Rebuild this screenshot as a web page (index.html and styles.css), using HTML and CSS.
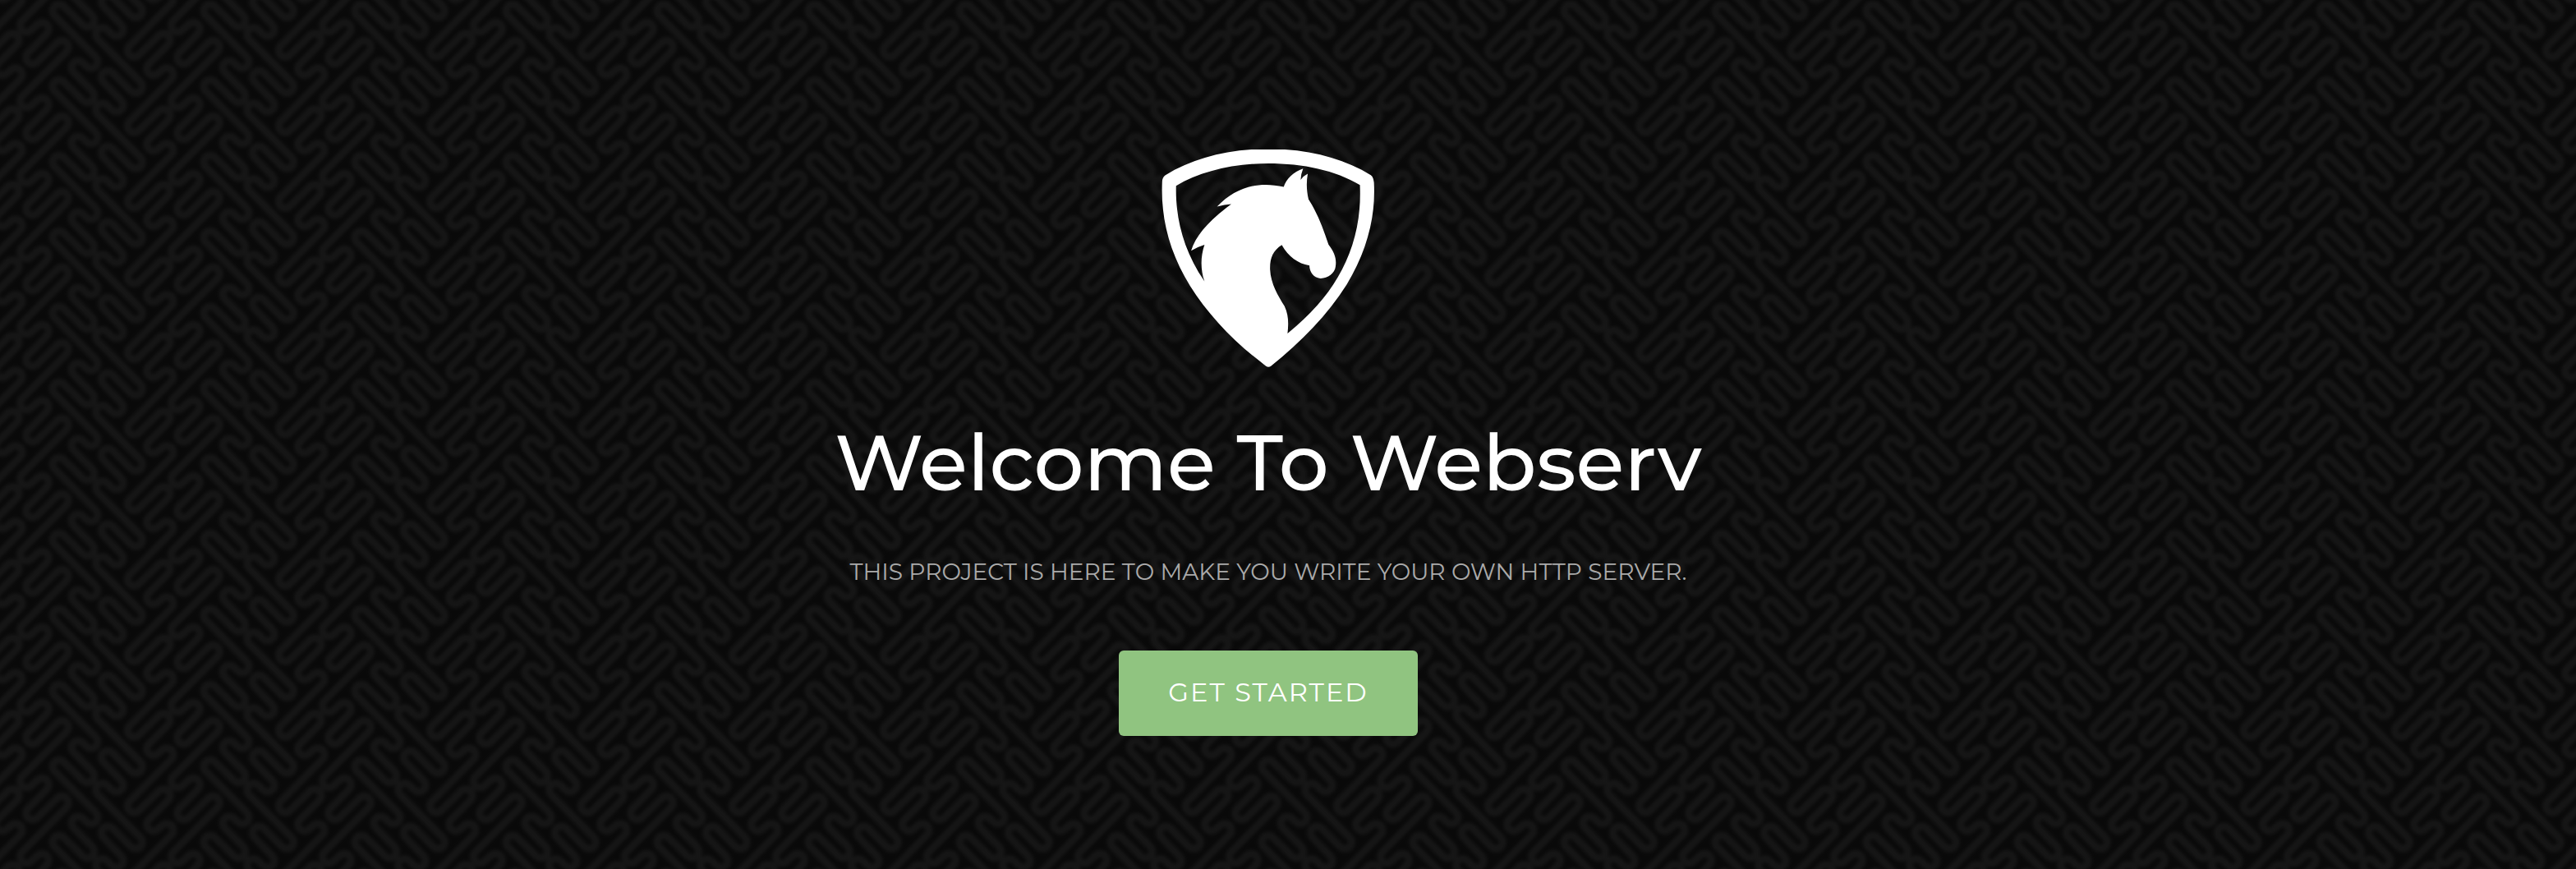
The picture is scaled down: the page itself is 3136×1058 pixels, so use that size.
FILE: index.html
```html
<!DOCTYPE html>
<html lang="en">
<head>
<meta charset="utf-8">
<meta name="viewport" content="width=device-width, initial-scale=1">
<title>Webserv</title>
<link rel="stylesheet" href="styles.css">
</head>
<body>
<main class="hero">
  <svg class="logo" viewBox="102 66 777 797" role="img" aria-label="Webserv logo">
    <path fill="#fff" fill-rule="evenodd" d="M102 185Q102 168 114 160C215 97 345 64 490 64S765 97 866 160Q878 168 878 200C882 320 850 440 778 560C709 670 612 770 500 859Q491 866 482 859C370 775 273 675 204 565C130 445 96 320 102 185ZM153 199C150 310 176 430 257 549C242 505 242 460 257 415Q233 422 208 437C225 380 275 325 355 266Q330 267 303 275C367 209 446 180 547 203C556 174 583 148 618 136Q610 155 609 177Q619 163 635 155C629 188 631 220 638 249C672 301 691 355 711 414C733 442 741 466 737 494C735 520 706 539 681 538C656 535 642 516 641 491C600 485 563 458 540 416C507 437 496 465 497 505C500 560 526 600 550 640C565 672 565 703 561 740C645 671 704 605 745 534C802 437 832 325 826 196C735 142 620 117 490 117C360 117 240 147 153 199Z"/>
  </svg>
  <h1 class="title">Welcome To Webserv</h1>
  <p class="lead">This project is here to make you write your own HTTP server.</p>
  <a class="button" href="#start">Get started</a>
</main>
</body>
</html>
```
FILE: styles.css
```css
* {
  box-sizing: border-box;
}

body {
  margin: 0;
  background-color: #090909;
  background-image: url("data:image/svg+xml,%3Csvg xmlns='http://www.w3.org/2000/svg' xmlns:xlink='http://www.w3.org/1999/xlink' width='184' height='92' viewBox='0 0 552 276'%3E%3Cdefs%3E%3Cfilter id='s' filterUnits='userSpaceOnUse' x='-60' y='-60' width='672' height='396' color-interpolation-filters='sRGB'%3E%3CfeGaussianBlur stdDeviation='6'/%3E%3C/filter%3E%3Cg id='a'%3E%3Cpath d='M337 57A24 24 0 0 1 303 91L233 23A24 24 0 0 0 199 57L350 208A24 24 0 0 1 316 242L302 229A24 24 0 0 0 268 263L337 333'/%3E%3Cpath d='M513 299A24 24 0 0 1 479 333L411 265A24 24 0 0 0 377 299L443 367A24 24 0 0 1 409 401L391 384A24 24 0 0 0 357 418L513 575'/%3E%3Cpath d='M473 167A24 24 0 0 0 507 201L580 129A24 24 0 0 1 614 163L543 234A24 24 0 0 0 577 268L592 255A24 24 0 0 1 626 289L473 443'/%3E%3Cpath d='M80 76A24 24 0 0 0 114 110L137 89A24 24 0 0 1 171 123L102 193A24 24 0 0 0 136 227L209 155A24 24 0 0 1 243 189L80 352'/%3E%3C/g%3E%3Cg id='b'%3E%3Cuse xlink:href='%23a' y='-552'/%3E%3Cuse xlink:href='%23a' y='-276'/%3E%3Cuse xlink:href='%23a'/%3E%3Cuse xlink:href='%23a' y='276'/%3E%3C/g%3E%3Cg id='c'%3E%3Cuse xlink:href='%23b' x='-552'/%3E%3Cuse xlink:href='%23b'/%3E%3Cuse xlink:href='%23b' x='552'/%3E%3C/g%3E%3C/defs%3E%3Cg fill='none' stroke-linejoin='round' stroke-linecap='round' filter='url(%23s)'%3E%3Cuse xlink:href='%23c' stroke='%23161616' stroke-width='27'/%3E%3C/g%3E%3C/svg%3E");
  background-size: 184px 92px;
  color: #fff;
  font-family: Montserrat, Inter, "Open Sans", sans-serif;
}

.hero {
  display: flex;
  flex-direction: column;
  align-items: center;
  min-height: 100vh;
  padding: 182px 48px 160px 0;
}

.logo {
  display: block;
  width: 260px;
  height: 265px;
}

.title {
  margin: 56px 0 0;
  font-size: 96px;
  font-weight: 500;
  line-height: 120px;
}

.lead {
  margin: 56px 0 0;
  color: #aaa;
  font-size: 28px;
  line-height: 34px;
  text-transform: uppercase;
}

.button {
  display: flex;
  align-items: center;
  justify-content: center;
  min-height: 104px;
  margin-top: 79px;
  padding: 0 60px 2px;
  border-radius: 6px;
  background: #90c480;
  color: #fff;
  font-size: 32px;
  letter-spacing: 2px;
  line-height: 40px;
  text-decoration: none;
  text-transform: uppercase;
}
```
